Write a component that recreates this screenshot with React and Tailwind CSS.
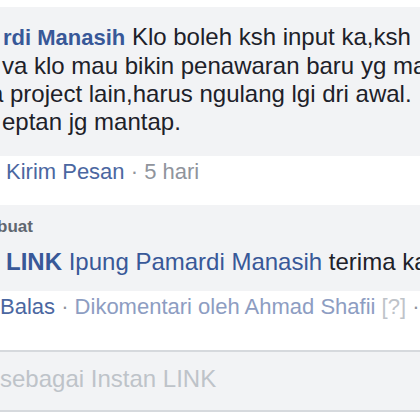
export default function App() {
  const font = { fontFamily: '"Liberation Sans", Arial, sans-serif' }
  return (
    <div className="w-[420px] h-[420px] overflow-hidden bg-white" style={font}>
      <div className="h-[7px] bg-white" />

      {/* comment bubble */}
      <div className="h-[149px] bg-[#f2f3f5] pt-[16px] text-[24px] leading-[28px] text-[#1d2129] overflow-hidden">
        <div className="whitespace-nowrap ml-[3px]">
          <span className="font-bold text-[22px] text-[#385898]">rdi Manasih</span> Klo boleh ksh input ka,ksh
        </div>
        <div className="whitespace-nowrap ml-[2px]">va klo mau bikin penawaran baru yg mau</div>
        <div className="whitespace-nowrap ml-[-10px]">a project lain,harus ngulang lgi dri awal.</div>
        <div className="whitespace-nowrap ml-[2px]">eptan jg mantap.</div>
      </div>

      {/* actions */}
      <div className="h-[49px] bg-white pt-[4px] text-[22px] leading-[24px] whitespace-nowrap pl-[6px]">
        <span className="text-[#4b67a1]">Kirim Pesan</span>
        <span className="text-[#90949c]"> · 5 hari</span>
      </div>

      {/* reply */}
      <div className="h-[86px] bg-[#f2f3f5] pt-[12px] overflow-hidden">
        <div className="text-[17px] leading-[20px] font-bold text-[#606770] whitespace-nowrap ml-[-3px]">buat</div>
        <div className="mt-[11px] text-[24px] leading-[28px] text-[#1d2129] whitespace-nowrap ml-[6px]">
          <span className="font-bold text-[#385898]">LINK</span>{' '}
          <span className="text-[#385898]">Ipung Pamardi Manasih</span> terima kasih
        </div>
      </div>

      <div className="h-[59px] bg-white pt-[4px] text-[22px] leading-[24px] whitespace-nowrap overflow-hidden">
        <span className="text-[#4b67a1]">Balas</span>
        <span className="text-[#90949c]"> · </span>
        <span className="text-[#8d9dc2]">Dikomentari oleh Ahmad Shafii</span>
        <span className="text-[#bec3c9]"> [?] </span>
        <span className="text-[#90949c]">·</span>
      </div>

      {/* input */}
      <div className="h-[62px] bg-[#f2f3f5] border-y-2 border-[#d6d9dd] pt-[13px] text-[24px] leading-[28px] text-[#bec3c9] whitespace-nowrap">
        sebagai Instan LINK
      </div>
    </div>
  )
}
